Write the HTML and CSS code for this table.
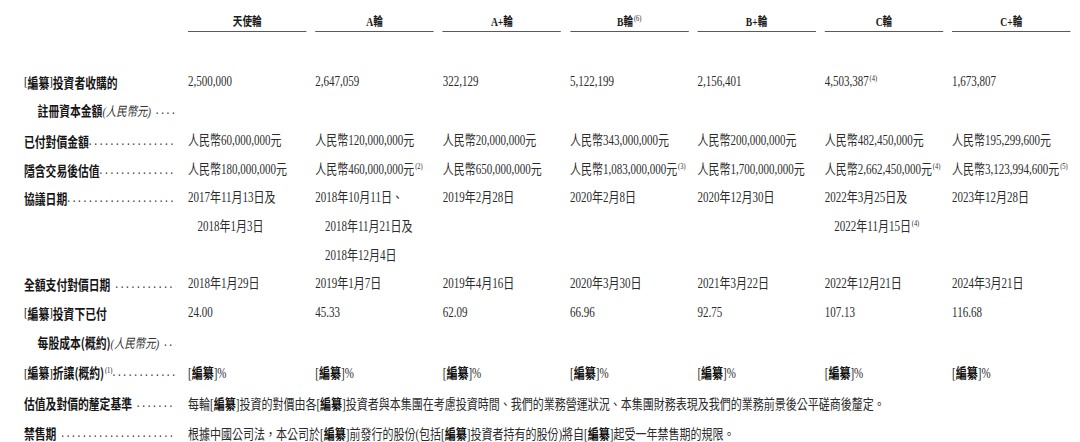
FILE: index.html
```html
<!DOCTYPE html>
<html lang="zh-Hant">
<head>
<meta charset="utf-8">
<title>投資者輪次</title>
<link rel="stylesheet" href="styles.css">
</head>
<body>
<div class="page">
  <div class="sheet">
    <div class="head">
      <div></div>
      <div class="hc">天使輪</div>
      <div class="hc">A輪</div>
      <div class="hc">A+輪</div>
      <div class="hc">B輪<span class="sup">(6)</span></div>
      <div class="hc">B+輪</div>
      <div class="hc">C輪</div>
      <div class="hc">C+輪</div>
    </div>
    <div class="grid">
      <div class="lab">
        <div class="ln"><span class="br">[</span>編纂<span class="br">]</span>投資者收購的</div>
        <div class="ln sub"><span class="t">註冊資本金額<span class="it">(人民幣元)</span></span><span class="dots gap"></span></div>
      </div>
      <div class="v">2,500,000</div>
      <div class="v">2,647,059</div>
      <div class="v">322,129</div>
      <div class="v">5,122,199</div>
      <div class="v">2,156,401</div>
      <div class="v">4,503,387<span class="sup">(4)</span></div>
      <div class="v">1,673,807</div>

      <div class="lab"><div class="ln"><span class="t">已付對價金額</span><span class="dots"></span></div></div>
      <div class="v">人民幣60,000,000元</div>
      <div class="v">人民幣120,000,000元</div>
      <div class="v">人民幣20,000,000元</div>
      <div class="v">人民幣343,000,000元</div>
      <div class="v">人民幣200,000,000元</div>
      <div class="v">人民幣482,450,000元</div>
      <div class="v">人民幣195,299,600元</div>

      <div class="lab"><div class="ln"><span class="t">隱含交易後估值</span><span class="dots"></span></div></div>
      <div class="v">人民幣180,000,000元</div>
      <div class="v">人民幣460,000,000元<span class="sup">(2)</span></div>
      <div class="v">人民幣650,000,000元</div>
      <div class="v">人民幣1,083,000,000元<span class="sup">(3)</span></div>
      <div class="v">人民幣1,700,000,000元</div>
      <div class="v">人民幣2,662,450,000元<span class="sup">(4)</span></div>
      <div class="v">人民幣3,123,994,600元<span class="sup">(5)</span></div>

      <div class="lab"><div class="ln"><span class="t">協議日期</span><span class="dots"></span></div></div>
      <div class="v"><div>2017年11月13日及</div><div class="ind">2018年1月3日</div></div>
      <div class="v"><div>2018年10月11日、</div><div class="ind">2018年11月21日及</div><div class="ind">2018年12月4日</div></div>
      <div class="v">2019年2月28日</div>
      <div class="v">2020年2月8日</div>
      <div class="v">2020年12月30日</div>
      <div class="v"><div>2022年3月25日及</div><div class="ind">2022年11月15日<span class="sup">(4)</span></div></div>
      <div class="v">2023年12月28日</div>

      <div class="lab"><div class="ln"><span class="t">全額支付對價日期</span><span class="dots gap"></span></div></div>
      <div class="v">2018年1月29日</div>
      <div class="v">2019年1月7日</div>
      <div class="v">2019年4月16日</div>
      <div class="v">2020年3月30日</div>
      <div class="v">2021年3月22日</div>
      <div class="v">2022年12月21日</div>
      <div class="v">2024年3月21日</div>

      <div class="lab">
        <div class="ln"><span class="br">[</span>編纂<span class="br">]</span>投資下已付</div>
        <div class="ln sub"><span class="t">每股成本(概約)<span class="it">(人民幣元)</span></span><span class="dots gap"></span></div>
      </div>
      <div class="v">24.00</div>
      <div class="v">45.33</div>
      <div class="v">62.09</div>
      <div class="v">66.96</div>
      <div class="v">92.75</div>
      <div class="v">107.13</div>
      <div class="v">116.68</div>

      <div class="lab"><div class="ln"><span class="t"><span class="br">[</span>編纂<span class="br">]</span>折讓(概約)<span class="sup">(1)</span></span><span class="dots"></span></div></div>
      <div class="v"><span class="br">[</span><b class="bk">編纂</b><span class="br">]</span>%</div>
      <div class="v"><span class="br">[</span><b class="bk">編纂</b><span class="br">]</span>%</div>
      <div class="v"><span class="br">[</span><b class="bk">編纂</b><span class="br">]</span>%</div>
      <div class="v"><span class="br">[</span><b class="bk">編纂</b><span class="br">]</span>%</div>
      <div class="v"><span class="br">[</span><b class="bk">編纂</b><span class="br">]</span>%</div>
      <div class="v"><span class="br">[</span><b class="bk">編纂</b><span class="br">]</span>%</div>
      <div class="v"><span class="br">[</span><b class="bk">編纂</b><span class="br">]</span>%</div>

      <div class="lab"><div class="ln"><span class="t">估值及對價的釐定基準</span><span class="dots gap"></span></div></div>
      <div class="v wide">每輪<span class="br">[</span><b class="bk">編纂</b><span class="br">]</span>投資的對價由各<span class="br">[</span><b class="bk">編纂</b><span class="br">]</span>投資者與本集團在考慮投資時間、我們的業務營運狀況、本集團財務表現及我們的業務前景後公平磋商後釐定。</div>

      <div class="lab"><div class="ln"><span class="t">禁售期</span><span class="dots gap"></span></div></div>
      <div class="v wide">根據中國公司法，本公司於<span class="br">[</span><b class="bk">編纂</b><span class="br">]</span>前發行的股份(包括<span class="br">[</span><b class="bk">編纂</b><span class="br">]</span>投資者持有的股份)將自<span class="br">[</span><b class="bk">編纂</b><span class="br">]</span>起受一年禁售期的規限。</div>
    </div>
  </div>
</div>
</body>
</html>
```
FILE: styles.css
```css
html, body {
  margin: 0;
  padding: 0;
  background: #ffffff;
  overflow: hidden;
}

.page {
  width: 1080px;
  height: 442px;
  overflow: hidden;
}

.sheet {
  width: 1350px;
  padding-left: 30px;
  box-sizing: border-box;
  transform: scaleX(0.8);
  transform-origin: 0 0;
  color: #2b2b2b;
  font-family: "Liberation Serif", "Noto Sans CJK TC", serif;
  font-size: 13.75px;
}

.head {
  display: grid;
  grid-template-columns: 205px repeat(7, 159.2px);
  align-items: start;
  height: 67.6px;
  padding-top: 15px;
  box-sizing: border-box;
}

.hc {
  width: 148px;
  text-align: center;
  font-family: "Liberation Serif", "Noto Sans CJK TC", serif;
  font-weight: 700;
  font-size: 12px;
  line-height: 14px;
  color: #1a1a1a;
  padding-bottom: 2px;
  border-bottom: 1.5px solid #5a5a5a;
}

.grid {
  display: grid;
  grid-template-columns: 205px repeat(7, 159.2px);
  line-height: 28.65px;
}

.lab {
  font-family: "Noto Sans CJK TC", sans-serif;
  font-weight: 700;
  font-size: 13.5px;
  color: #151515;
  padding-right: 16px;
}

.ln {
  display: flex;
  white-space: nowrap;
}

.ln.sub {
  padding-left: 17px;
}

.t {
  flex: none;
}

.dots {
  flex: 1;
  overflow: hidden;
  font-family: "Liberation Serif", serif;
  font-size: 14px;
  font-weight: 400;
  color: #333;
}

.dots::before {
  content: "........................................................";
  letter-spacing: 3.3px;
}

.dots.gap {
  margin-left: 6px;
}

.br {
  font-family: "Liberation Serif", serif;
  font-weight: 400;
}

.it {
  font-family: "Liberation Serif", "Noto Sans CJK TC", serif;
  font-style: italic;
  font-weight: 400;
  font-size: 13px;
  color: #333;
}

.v {
  white-space: nowrap;
}

.ind {
  padding-left: 12px;
}

.wide {
  grid-column: 2 / -1;
}

.bk {
  font-family: "Noto Sans CJK TC", sans-serif;
  font-weight: 700;
  color: #111;
}

.sup {
  font-family: "Liberation Serif", serif;
  font-weight: 400;
  font-size: 8px;
  line-height: 0;
  vertical-align: 5px;
  margin-left: 1px;
}
```
